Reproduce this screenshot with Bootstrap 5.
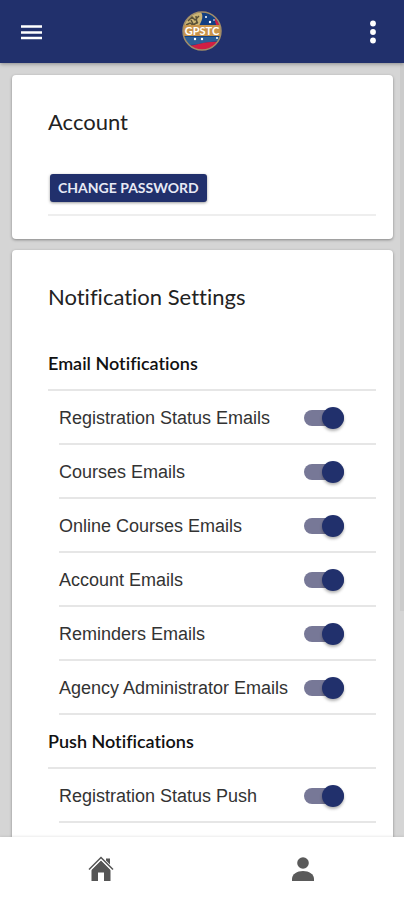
<!DOCTYPE html>
<html lang="en">
<head>
<meta charset="utf-8">
<meta name="viewport" content="width=device-width, initial-scale=1">
<title>Account and notification settings</title>
<link href="https://cdn.jsdelivr.net/npm/bootstrap@5.3.0/dist/css/bootstrap.min.css" rel="stylesheet">
<style>
  :root { --navy: #21306c; --rule: #e6e6e6; }
  body { font-family: Lato, sans-serif; font-variant-ligatures: none; background: #d5d5d5; color: #222; }
  .topbar { background: var(--navy); height: 63px; padding: 0 16px 0 21px; box-shadow: 0 1px 4px rgba(0,0,0,.35); z-index: 2; }
  .topbar .btn { --bs-btn-padding-x: 0; --bs-btn-padding-y: 0; --bs-btn-border-width: 0; line-height: 0; }
  .scroller { padding: 12px 11px 0 12px; gap: 11px; }
  .thumb { position: absolute; top: 0; right: 0; width: 4px; height: 548px; background: #cbcbcb; }
  .panel { --bs-card-border-width: 0; --bs-card-border-radius: 4px; box-shadow: 0 1px 3px rgba(0,0,0,.38); padding: 0 17px 0 36px; }
  .panel-account { height: 164px; }
  .panel h1, .panel h2 { font-size: 22px; line-height: 26px; font-weight: 400; margin: 0; }
  .panel h1 { padding-top: 34px; }
  .panel h2 { padding: 34px 0 27px; }
  .action { padding: 39px 2px 12px; border-bottom: 2px solid #eee; }
  .btn-navy { --bs-btn-bg: var(--navy); --bs-btn-color: #e8eaf5; --bs-btn-hover-bg: #1a2657; --bs-btn-hover-color: #fff; --bs-btn-border-width: 0; --bs-btn-border-radius: 3px; --bs-btn-padding-x: 8px; --bs-btn-padding-y: 4px; --bs-btn-font-size: 14px; --bs-btn-line-height: 20px; --bs-btn-font-weight: 700; box-shadow: 0 1px 3px rgba(0,0,0,.4); display: block; }
  .panel h3 { font-size: 18px; line-height: 52px; height: 54px; font-weight: 600; margin: 0; color: #111; border-bottom: 2px solid var(--rule); }
  .options { --bs-list-group-border-width: 0; --bs-list-group-color: #333; padding-left: 11px; font-family: "Liberation Sans", Arial, sans-serif; font-size: 18px; }
  .options .list-group-item { height: 54px; padding: 2px 32px 0 0; border-bottom: 2px solid var(--rule); }
  .toggle.form-check-input { width: 40px; height: 16px; border: 0; border-radius: 8px; margin: 0; background: #bbb; float: none; flex: none; display: flex; align-items: center; cursor: pointer; }
  .toggle.form-check-input:checked { background: #777897; justify-content: flex-end; }
  .toggle::after { content: ""; width: 22px; height: 22px; flex: none; border-radius: 50%; background: #f5f5f5; box-shadow: 0 2px 3px rgba(0,0,0,.3); }
  .toggle:checked::after { background: var(--navy); }
  .tabs { background: #fff; height: 63px; z-index: 2; box-shadow: 0 -1px 2px rgba(0,0,0,.08); }
</style>
</head>
<body class="vh-100 d-flex flex-column overflow-hidden">
<header class="topbar d-flex align-items-center justify-content-between flex-shrink-0 position-relative">
  <button type="button" class="btn" aria-label="Menu">
    <svg width="22" height="18" viewBox="0 0 22 18"><path d="M0 3.500h21M0 9.500h21M0 15h21" stroke="#fff" stroke-width="2.600"/></svg>
  </button>
  <a href="#" aria-label="Home page">
    <svg width="44" height="42" viewBox="0 0 42 42" class="d-block">
      <defs><clipPath id="disc"><circle cx="22" cy="20" r="19"/></clipPath></defs>
      <g clip-path="url(#disc)">
        <path fill="#123f82" d="M0 0h42v42H0z"/>
        <path fill="#cbb474" d="M0 0h20c4 4 2 9 0 13l-3 5H0z"/>
        <path d="M8 10l4-4 3 3 4-4M6 14l4-2 3 2 5-3M11 9l2 4M16 5l1 8" fill="none" stroke="#5a5139" stroke-width="1.500"/>
        <path fill="#d01f43" d="M35 7l6 8h-4c-2-3-2-5-2-8z"/>
        <path fill="#2d5e96" d="M0 26h42v4c-14 0-22 4-34 4z"/>
        <path fill="#d01f43" d="M8 35c10-1 18-5 32-4v11H8z"/>
        <g fill="#fff"><circle cx="26" cy="6" r="1"/><circle cx="30" cy="11" r="1.200"/><circle cx="34" cy="9" r=".8"/><circle cx="15" cy="28" r="1.200"/><circle cx="22" cy="28" r="1.200"/><circle cx="37" cy="27" r="1"/></g>
        <path fill="#c9944a" d="M0 14h42v11H0z"/>
      </g>
      <circle cx="22" cy="20" r="19" fill="none" stroke="#a28d68" stroke-width="1.500"/>
      <text x="22" y="24" text-anchor="middle" font-family="Lato, sans-serif" font-size="11" font-weight="700" fill="#fff">GPSTC</text>
    </svg>
  </a>
  <button type="button" class="btn" aria-label="More options">
    <svg width="30" height="26" viewBox="0 0 30 26" fill="#fff"><circle cx="15" cy="4.500" r="2.900"/><circle cx="15" cy="13" r="2.900"/><circle cx="15" cy="21.500" r="2.900"/></svg>
  </button>
</header>

<main class="scroller flex-fill d-flex flex-column overflow-hidden position-relative">
  <div class="thumb" aria-hidden="true"></div>
  <section class="card panel panel-account flex-shrink-0">
    <h1>Account</h1>
    <div class="action"><button type="button" class="btn btn-navy">CHANGE PASSWORD</button></div>
  </section>
  <section class="card panel rounded-bottom-0 flex-shrink-0 flex-grow-1">
    <h2>Notification Settings</h2>
    <h3>Email Notifications</h3>
    <div class="options list-group rounded-0">
      <div class="list-group-item d-flex align-items-center justify-content-between"><label for="e1">Registration Status Emails</label><input class="form-check-input toggle" type="checkbox" role="switch" id="e1" checked></div>
      <div class="list-group-item d-flex align-items-center justify-content-between"><label for="e2">Courses Emails</label><input class="form-check-input toggle" type="checkbox" role="switch" id="e2" checked></div>
      <div class="list-group-item d-flex align-items-center justify-content-between"><label for="e3">Online Courses Emails</label><input class="form-check-input toggle" type="checkbox" role="switch" id="e3" checked></div>
      <div class="list-group-item d-flex align-items-center justify-content-between"><label for="e4">Account Emails</label><input class="form-check-input toggle" type="checkbox" role="switch" id="e4" checked></div>
      <div class="list-group-item d-flex align-items-center justify-content-between"><label for="e5">Reminders Emails</label><input class="form-check-input toggle" type="checkbox" role="switch" id="e5" checked></div>
      <div class="list-group-item d-flex align-items-center justify-content-between"><label for="e6">Agency Administrator Emails</label><input class="form-check-input toggle" type="checkbox" role="switch" id="e6" checked></div>
    </div>
    <h3>Push Notifications</h3>
    <div class="options list-group rounded-0">
      <div class="list-group-item d-flex align-items-center justify-content-between"><label for="p1">Registration Status Push</label><input class="form-check-input toggle" type="checkbox" role="switch" id="p1" checked></div>
    </div>
  </section>
</main>

<nav class="tabs d-flex flex-shrink-0 position-relative" aria-label="Main">
  <a href="#" class="flex-fill w-50 d-flex align-items-center justify-content-center" aria-label="Home">
    <svg width="26" height="26" viewBox="0 0 26 26" fill="#555"><path d="M18 2.500h4v7l-4-4z"/><path d="M13 4L3.500 13.500V25H10v-8.500h6V25h6.500V13.500z"/><path d="M1 14L13 2l12 12" fill="none" stroke="#fff" stroke-width="3.500"/><path d="M1 13.500L13 1.500l12 12" fill="none" stroke="#555" stroke-width="1.500"/></svg>
  </a>
  <a href="#" class="flex-fill w-50 d-flex align-items-center justify-content-center" aria-label="Profile">
    <svg width="24" height="26" viewBox="0 0 24 26" fill="#5a5a5a"><circle cx="12" cy="7" r="5.800"/><path d="M1 25v-2c0-5 5-8 11-8s11 3 11 8v2z"/></svg>
  </a>
</nav>
<script src="https://cdn.jsdelivr.net/npm/bootstrap@5.3.0/dist/js/bootstrap.bundle.min.js"></script>
</body>
</html>
